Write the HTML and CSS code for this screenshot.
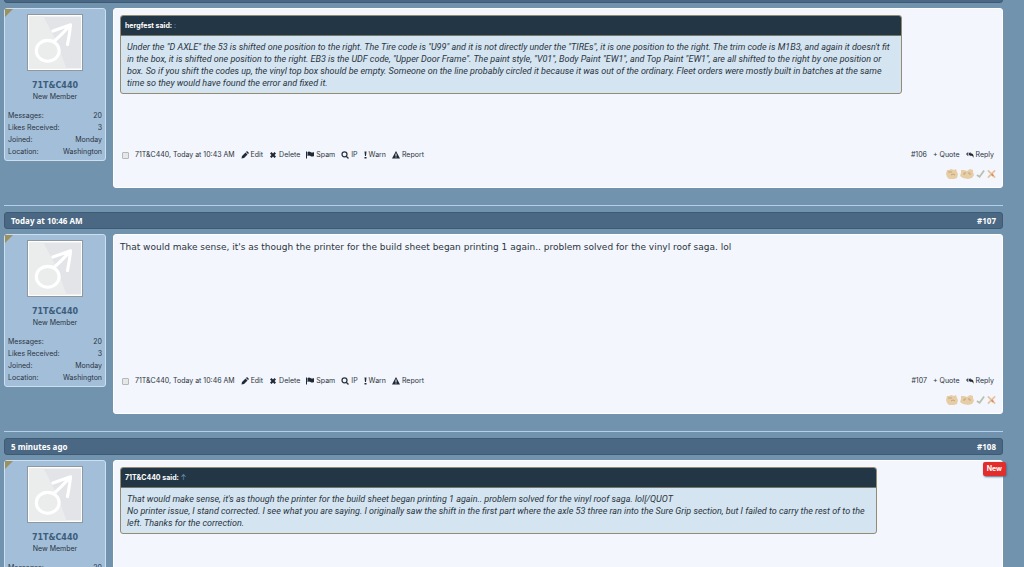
FILE: index.html
```html
<!DOCTYPE html>
<html lang="en">
<head>
  <meta charset="utf-8">
  <title>Forum thread</title>
  <meta name="viewport" content="width=device-width, initial-scale=1">
  <link rel="stylesheet" href="styles.css">
</head>
<body>
  <svg class="sprite" aria-hidden="true">
    <symbol id="male" viewBox="0 0 50 50">
      <rect width="50" height="50" fill="#e2e4e8"/>
      <path d="M0 0H14L27 25L36 50H0Z" fill="#ebecec"/>
      <g fill="none" stroke="#fff" stroke-width="3" stroke-linecap="round" stroke-linejoin="round">
        <ellipse cx="18" cy="33" rx="11" ry="10"/>
        <path d="M24 24Q32 17 40 8M23 14L40 8Q39 17 37 27"/>
      </g>
    </symbol>
    <symbol id="pencil" viewBox="0 0 16 16"><path d="M1 15L2 10L9 3L13 7L6 14ZM10 2L12 0L16 4L14 6Z"/></symbol>
    <symbol id="cross" viewBox="0 0 16 16"><path d="M2 5L5 2L8 5L11 2L14 5L11 8L14 11L11 14L8 11L5 14L2 11L5 8Z"/></symbol>
    <symbol id="flag" viewBox="0 0 16 16"><path d="M0 1H2V15H0ZM3 2Q6 0 9 2T16 2V10Q12 12 9 10T3 10Z"/></symbol>
    <symbol id="search" viewBox="0 0 16 16"><path d="M10 10L15 15M12 6.500A5 5 0 1 1 2 6.500A5 5 0 1 1 12 6.500Z" fill="none" stroke="currentColor" stroke-width="2.500"/></symbol>
    <symbol id="bang" viewBox="0 0 6 16"><path d="M1 1H5L4 10H2ZM1 12H5V15H1Z"/></symbol>
    <symbol id="alert" viewBox="0 0 16 16"><path fill-rule="evenodd" d="M8 0L16 15H0ZM7 5V10H9V5ZM7 11V13H9V11Z"/></symbol>
    <symbol id="reply" viewBox="0 0 18 16"><path d="M5 1V4L3 6L5 8V11L0 6ZM10 1V4Q18 4 17 14Q15 9 10 9V11L5 6Z"/></symbol>
    <symbol id="thumb-a" viewBox="0 0 12 10">
      <path d="M1 1L3 1L5 0L8 1L10 0L11 3L12 5L11 9L8 10H3L1 8L0 5Z" fill="#e6cda5"/>
      <path d="M2 3H6M5 6Q7 4 9 6" fill="none" stroke="#c4a67c" stroke-width="1"/>
    </symbol>
    <symbol id="thumb-b" viewBox="0 0 14 10">
      <path d="M1 1L4 1L7 2L10 0L13 1L13 3L14 6L12 9L8 10L3 9L0 7L1 4Z" fill="#e6cda5"/>
      <path d="M4 6V4H6M8 4H10V6" fill="none" stroke="#c4a67c" stroke-width="1"/>
    </symbol>
    <symbol id="tick" viewBox="0 0 10 10"><path d="M1 6L4 8L9 1" fill="none" stroke="#b9c0b0" stroke-width="2"/></symbol>
    <symbol id="nope" viewBox="0 0 10 10">
      <path d="M1 1L9 9M9 1L1 9" fill="none" stroke="#e6c49c" stroke-width="2"/>
      <path d="M5 5L7 7" stroke="#df8a68" stroke-width="2"/>
    </symbol>
  </svg>

  <div class="thread">
    <div class="post">
      <div class="post-bar"></div>
      <div class="post-row">
        <div class="user">
          <svg class="avatar"><use href="#male"/></svg>
          <a class="username" href="#user">71T&amp;C440</a>
          <div class="rank">New Member</div>
          <dl class="stats">
            <dt>Messages:</dt><dd>20</dd>
            <dt>Likes Received:</dt><dd>3</dd>
            <dt>Joined:</dt><dd>Monday</dd>
            <dt>Location:</dt><dd>Washington</dd>
          </dl>
        </div>
        <div class="content">
          <div class="quote">
            <div class="quote-head">hergfest said: <a href="#source">:</a></div>
            <div class="quote-text">Under the "D AXLE" the 53 is shifted one position to the right. The Tire code is "U99" and it is not directly under the "TIREs", it is one position to the right. The trim code is M1B3, and again it doesn't fit<br>in the box, it is shifted one position to the right. EB3 is the UDF code, "Upper Door Frame". The paint style, "V01", Body Paint "EW1", and Top Paint "EW1", are all shifted to the right by one position or<br>box. So if you shift the codes up, the vinyl top box should be empty. Someone on the line probably circled it because it was out of the ordinary. Fleet orders were mostly built in batches at the same<br>time so they would have found the error and fixed it.</div>
          </div>
          <div class="controls">
            <input type="checkbox" id="pick106"><label for="pick106">71T&amp;C440, Today at 10:43 AM</label>
            <a href="#edit"><svg><use href="#pencil"/></svg>Edit</a>
            <a href="#delete"><svg><use href="#cross"/></svg>Delete</a>
            <a href="#spam"><svg><use href="#flag"/></svg>Spam</a>
            <a href="#ip"><svg><use href="#search"/></svg>IP</a>
            <a href="#warn"><svg class="thin"><use href="#bang"/></svg>Warn</a>
            <a href="#report"><svg><use href="#alert"/></svg>Report</a>
            <div class="right"><a href="#106">#106</a><a href="#quote">+ Quote</a><a href="#reply"><svg><use href="#reply"/></svg>Reply</a></div>
          </div>
          <div class="ratings">
            <button aria-label="Like"><svg><use href="#thumb-a"/></svg></button>
            <button aria-label="Funny"><svg class="wide"><use href="#thumb-b"/></svg></button>
            <button aria-label="Agree"><svg class="small"><use href="#tick"/></svg></button>
            <button aria-label="Disagree"><svg class="small"><use href="#nope"/></svg></button>
          </div>
        </div>
      </div>
    </div>

    <div class="post">
      <div class="post-bar"><span>Today at 10:46 AM</span><a href="#107">#107</a></div>
      <div class="post-row">
        <div class="user">
          <svg class="avatar"><use href="#male"/></svg>
          <a class="username" href="#user">71T&amp;C440</a>
          <div class="rank">New Member</div>
          <dl class="stats">
            <dt>Messages:</dt><dd>20</dd>
            <dt>Likes Received:</dt><dd>3</dd>
            <dt>Joined:</dt><dd>Monday</dd>
            <dt>Location:</dt><dd>Washington</dd>
          </dl>
        </div>
        <div class="content">
          <div class="message">That would make sense, it's as though the printer for the build sheet began printing 1 again.. problem solved for the vinyl roof saga. lol</div>
          <div class="controls">
            <input type="checkbox" id="pick107"><label for="pick107">71T&amp;C440, Today at 10:46 AM</label>
            <a href="#edit"><svg><use href="#pencil"/></svg>Edit</a>
            <a href="#delete"><svg><use href="#cross"/></svg>Delete</a>
            <a href="#spam"><svg><use href="#flag"/></svg>Spam</a>
            <a href="#ip"><svg><use href="#search"/></svg>IP</a>
            <a href="#warn"><svg class="thin"><use href="#bang"/></svg>Warn</a>
            <a href="#report"><svg><use href="#alert"/></svg>Report</a>
            <div class="right"><a href="#107">#107</a><a href="#quote">+ Quote</a><a href="#reply"><svg><use href="#reply"/></svg>Reply</a></div>
          </div>
          <div class="ratings">
            <button aria-label="Like"><svg><use href="#thumb-a"/></svg></button>
            <button aria-label="Funny"><svg class="wide"><use href="#thumb-b"/></svg></button>
            <button aria-label="Agree"><svg class="small"><use href="#tick"/></svg></button>
            <button aria-label="Disagree"><svg class="small"><use href="#nope"/></svg></button>
          </div>
        </div>
      </div>
    </div>

    <div class="post">
      <div class="post-bar"><span>5 minutes ago</span><a href="#108">#108</a></div>
      <div class="post-row">
        <div class="user">
          <svg class="avatar"><use href="#male"/></svg>
          <a class="username" href="#user">71T&amp;C440</a>
          <div class="rank">New Member</div>
          <dl class="stats">
            <dt>Messages:</dt><dd>20</dd>
          </dl>
        </div>
        <div class="content">
          <span class="new">New</span>
          <div class="quote">
            <div class="quote-head">71T&amp;C440 said: <a href="#source">↑</a></div>
            <div class="quote-text">That would make sense, it's as though the printer for the build sheet began printing 1 again.. problem solved for the vinyl roof saga. lol[/QUOT<br>No printer issue, I stand corrected. I see what you are saying. I originally saw the shift in the first part where the axle 53 three ran into the Sure Grip section, but I failed to carry the rest of to the<br>left. Thanks for the correction.</div>
          </div>
        </div>
      </div>
    </div>
  </div>
</body>
</html>
```
FILE: styles.css
```css
* {
  box-sizing: border-box;
}

body {
  margin: 0;
  height: 100vh;
  overflow: hidden;
  background: #7293ae;
  color: #2b3440;
  font-family: Inter, "DejaVu Sans Condensed", sans-serif;
  font-size: 7px;
  line-height: 12px;
}

a {
  color: inherit;
  text-decoration: none;
}

.sprite {
  display: none;
}

/* thread is scrolled so the first bar is cut by the window */
.thread {
  margin: -14px 21px 0 4px;
}

.post + .post {
  margin-top: 17px;
  padding-top: 6px;
  border-top: 1px solid #b4cfe8;
}

.post-bar {
  display: flex;
  justify-content: space-between;
  align-items: center;
  height: 17px;
  padding: 0 6px;
  margin-bottom: 5px;
  background: #4a6883;
  border: 1px solid #3e5b75;
  border-radius: 3px;
  color: #fff;
  font-family: "Noto Sans", "DejaVu Sans", sans-serif;
  font-size: 8px;
  font-weight: bold;
}

.post-row {
  display: flex;
  align-items: flex-start;
  gap: 7px;
}

.user {
  position: relative;
  flex: none;
  width: 102px;
  padding: 5px 3px 2px;
  background: #a2bed9;
  border: 1px solid #cbdff0;
  border-radius: 3px;
  text-align: center;
}

.user::before {
  content: "";
  position: absolute;
  left: 0;
  top: 0;
  border-top: 8px solid #9a9060;
  border-right: 8px solid transparent;
}

.avatar {
  display: block;
  width: 56px;
  height: 57px;
  margin: 0 auto 9px;
  padding: 1px;
  background: #fff;
  border: 1px solid #8f979f;
}

.username {
  display: block;
  color: #3c5d7b;
  font-family: "DejaVu Sans", sans-serif;
  font-size: 8px;
  font-weight: bold;
}

.rank {
  line-height: 10px;
}

.stats {
  display: grid;
  grid-template-columns: auto auto;
  margin: 8px 0 0;
  text-align: left;
  white-space: nowrap;
}

.stats dd {
  margin: 0;
  text-align: right;
}

.content {
  position: relative;
  display: flex;
  flex-direction: column;
  flex: 1;
  min-height: 180px;
  padding: 6px 6px 8px;
  background: #f3f6fc;
  border: 1px solid #fff;
  border-radius: 3px;
}

.message {
  font-family: "DejaVu Sans", sans-serif;
  font-size: 9px;
}

.quote {
  width: fit-content;
  border: 1px solid #958b70;
  border-radius: 3px;
  background: #d4e4f1;
  overflow: hidden;
}

.quote-head {
  padding: 4px 4px 3px;
  background: #233646;
  border-bottom: 1px solid #77766a;
  color: #fff;
  font-weight: bold;
}

.quote-head a {
  color: #6f9ac0;
  font-weight: normal;
}

.quote-text {
  padding: 5px 11px 4px 6px;
  font-family: Roboto, "DejaVu Sans", sans-serif;
  font-size: 9px;
  font-style: italic;
}

.controls {
  display: flex;
  align-items: center;
  gap: 6px;
  margin-top: auto;
  padding: 0 2px;
}

.controls input {
  appearance: none;
  width: 7px;
  height: 7px;
  margin: 0;
  background: #e6e8e8;
  border: 1px solid #b5b8ba;
  border-radius: 1px;
}

.controls a {
  display: flex;
  align-items: center;
  gap: 2px;
}

.controls svg {
  width: 8px;
  height: 8px;
  fill: #1f2a36;
}

.controls .thin {
  width: 3px;
}

.right {
  display: flex;
  gap: 6px;
  margin-left: auto;
}

.ratings {
  display: flex;
  justify-content: flex-end;
  align-items: center;
  gap: 2px;
  margin-top: 8px;
}

.ratings button {
  display: block;
  padding: 0;
  border: 0;
  background: none;
}

.ratings svg {
  display: block;
  width: 12px;
  height: 10px;
}

.ratings .wide {
  width: 14px;
}

.ratings .small {
  width: 9px;
}

.new {
  position: absolute;
  top: 1px;
  right: -4px;
  padding: 1px 4px;
  background: #e32c2c;
  border-radius: 2px;
  box-shadow: 1px 1px 2px #55708a;
  color: #fff;
  font-weight: bold;
}
```
